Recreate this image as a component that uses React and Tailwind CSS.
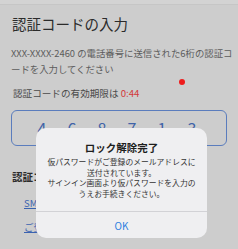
export default function App() {
  const digits = ['4', '6', '8', '7', '1', '3'];

  return (
    <div
      className="relative w-[238px] h-[249px] overflow-hidden bg-[#cdcdcd]"
      style={{ fontFamily: '"Noto Sans CJK JP", "Noto Sans", sans-serif' }}
    >
      {/* header strip */}
      <div className="h-[5px] bg-[#d3d3d3] border-b border-[#c6c6c6]" />

      <div className="flex flex-col px-[11px]">
        <h1 className="mt-[9px] text-[14.5px] leading-[20px] text-[#2b2b2b] pl-px">認証コードの入力</h1>

        <p className="mt-[11px] w-[222px] text-[9.4px] leading-[16px] text-[#5c5c5c]">
          XXX-XXXX-2460 の電話番号に送信された6桁の認証コードを入力してください
        </p>

        <p className="mt-[9px] pl-[2px] text-[9.6px] leading-[14px] text-[#4a4a4a]">
          認証コードの有効期限は <span className="text-[#d23a3a]">0:44</span>
        </p>

        <div className="mt-[10px] h-[36px] rounded-[6px] border border-[#5b7dbd] flex items-center gap-[16px] pl-[23px]">
          {digits.map((d, i) => (
            <span key={i} className="text-[16px] leading-none text-[#3f63a8] w-[14px] text-center">
              {d}
            </span>
          ))}
        </div>

        <p className="mt-[24px] pl-px text-[10.5px] leading-[14px] font-bold text-[#2b2b2b]">認証コードが届かない場合</p>

        <a className="mt-[12px] ml-[13px] text-[9.5px] leading-[14px] text-[#3a62b0] underline">SMSで認証コードを再送信する</a>

        <a className="mt-[10px] ml-[13px] text-[9.5px] leading-[14px] text-[#3a62b0] underline">ご登録の電話番号が変わった方はこちら</a>
      </div>

      {/* touch indicator */}
      <span className="absolute left-[179px] top-[79px] w-[6px] h-[6px] rounded-full bg-[#ee1c1c]" />

      {/* alert dialog */}
      <div className="absolute left-[36px] top-[128px] w-[171px] h-[110px] rounded-[10px] bg-[#efeff1] flex flex-col">
        <div className="flex-1 flex flex-col items-center pt-[13px] px-[8px]">
          <p className="text-[10.5px] leading-[14px] font-bold text-[#1e1e1e]">ロック解除完了</p>
          <p className="mt-[2px] text-[7.8px] leading-[10.5px] text-[#333] text-center">
            仮パスワードがご登録のメールアドレスに
            <br />
            送付されています。
            <br />
            サインイン画面より仮パスワードを入力の
            <br />
            うえお手続きください。
          </p>
        </div>
        <div className="h-[27px] border-t border-[#d2d2d6] flex items-center justify-center">
          <span className="text-[10px] text-[#2f7fe0]">OK</span>
        </div>
      </div>
    </div>
  );
}
